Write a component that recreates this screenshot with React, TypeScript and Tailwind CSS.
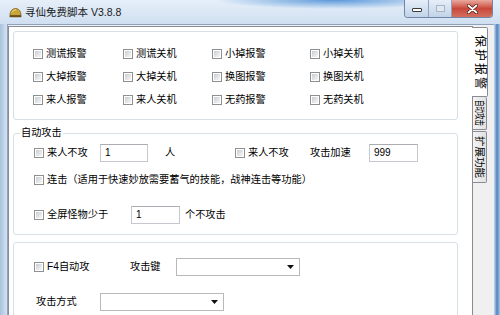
const Box = () => (
  <span className="w-[10px] h-[10px] shrink-0 border border-[#8e8f8f] bg-white p-[1px] flex">
    <span className="flex-1 bg-linear-to-br from-[#c9cdd3] to-[#f7f7f7]" />
  </span>
);

const Check = ({ label }: { label: string }) => (
  <div className="flex items-center gap-[3px] whitespace-nowrap">
    <Box />
    <span>{label}</span>
  </div>
);

const Field = ({ w, value }: { w: string; value: string }) => (
  <div className={`${w} h-[18px] shrink-0 border border-[#c5c8ce] border-t-[#abadb3] bg-white text-[10px] pl-[4px] flex items-center`}>
    {value}
  </div>
);

const Select = () => (
  <div className="w-[124px] h-[18px] shrink-0 border border-[#b9b9b9] bg-white flex items-center justify-end pr-[5px]">
    <svg width="7" height="4" viewBox="0 0 7 4">
      <path d="M0 0h7L3.5 4z" fill="#111" />
    </svg>
  </div>
);

const App = () => {
  return (
    <div className="w-[500px] h-[315px] overflow-hidden flex flex-col font-['Liberation_Sans','Noto_Sans_CJK_SC',sans-serif] text-[10.2px] leading-none text-black">
      {/* title bar */}
      <div className="h-[24px] shrink-0 flex items-start bg-[radial-gradient(ellipse_120px_9px_at_335px_0px,#5a98da,transparent),linear-gradient(180deg,#e6eff9,#cfdff1)]">
        <div className="flex items-center h-[25px] pl-[9px] gap-[3px]">
          <svg width="13" height="11" viewBox="0 0 13 11">
            <path d="M1 8.5C1 4 3.5 1.5 6.5 1.5S12 4 12 8.5z" fill="#c9a437" stroke="#7a5b18" strokeWidth="0.8" />
            <path d="M3 5.5C4 3.5 5.5 2.8 7 2.8" stroke="#f3df8a" strokeWidth="1" fill="none" />
            <rect x="0.5" y="8.3" width="12" height="2" rx="0.8" fill="#6b4e14" />
          </svg>
          <span className="text-[10.5px] text-[#1a1a1a]">寻仙免费脚本 V3.8.8</span>
        </div>
        <div className="ml-auto mr-[7px] flex h-[18px] rounded-b-[4px] overflow-hidden border border-t-0 border-[#6f85a3]">
          <div className="w-[24px] flex items-center justify-center pt-[3px] bg-linear-to-b from-[#e6eef8] to-[#c1d3e9] border-r border-[#8fa3bf]">
            <span className="w-[10px] h-[4px] bg-white border border-[#3a3a3a] rounded-[1px]" />
          </div>
          <div className="w-[23px] flex items-center justify-center bg-linear-to-b from-[#e6eef8] to-[#c1d3e9] border-r border-[#8fa3bf]">
            <span className="w-[9px] h-[7px] border border-[#a9b5c5] bg-[#dfe7f1]" />
          </div>
          <div className="w-[40px] flex items-center justify-center bg-linear-to-b from-[#e9a89f] via-[#c8473b] to-[#d36e5f]">
            <svg width="11" height="10" viewBox="0 0 11 10">
              <path d="M1.5 1.5l8 7M9.5 1.5l-8 7" stroke="#4a1b15" strokeWidth="3.2" strokeLinecap="round" />
              <path d="M1.5 1.5l8 7M9.5 1.5l-8 7" stroke="#fff" strokeWidth="1.8" strokeLinecap="round" />
            </svg>
          </div>
        </div>
      </div>

      <div className="flex-1 flex min-h-0">
        {/* left frame */}
        <div className="w-[7px] shrink-0 bg-linear-to-r from-[#a9c2de] to-[#d3e2f2]" />

        {/* client area */}
        <div className="w-[487px] shrink-0 flex border-t border-l border-[#8ea2bc] bg-[#f0f0f0] pt-[1px]">
          {/* tab page */}
          <div className="w-[465px] shrink-0 bg-white border-t border-l border-r border-[#898c95] pl-[4px] pt-[4px] flex flex-col">
            {/* alarms */}
            <div className="w-[445px] h-[89px] shrink-0 border border-[#d5dfe5] rounded-[3px] pl-[19px] pt-[11px] grid grid-cols-[90px_89px_98px_1fr] auto-rows-[23px] items-center">
              <Check label="测谎报警" />
              <Check label="测谎关机" />
              <Check label="小掉报警" />
              <Check label="小掉关机" />
              <Check label="大掉报警" />
              <Check label="大掉关机" />
              <Check label="换图报警" />
              <Check label="换图关机" />
              <Check label="来人报警" />
              <Check label="来人关机" />
              <Check label="无药报警" />
              <Check label="无药关机" />
            </div>

            {/* auto attack group */}
            <div className="relative mt-[13px] w-[445px] h-[102px] shrink-0 border border-[#d5dfe5] rounded-[3px] flex flex-col">
              <span className="absolute -top-[6px] left-[6px] bg-white px-[1px]">自动攻击</span>
              <div className="mt-[9px] h-[20px] flex items-center pl-[20px]">
                <div className="w-[66px]"><Check label="来人不攻" /></div>
                <Field w="w-[48px]" value="1" />
                <span className="ml-[17px] w-[11px]">人</span>
                <div className="ml-[59px] w-[75px]"><Check label="来人不攻" /></div>
                <span className="w-[59px]">攻击加速</span>
                <Field w="w-[49px]" value="999" />
              </div>
              <div className="mt-[7px] h-[20px] flex items-center pl-[20px]">
                <Check label="连击（适用于快速妙放需要蓄气的技能，战神连击等功能）" />
              </div>
              <div className="mt-[15px] h-[20px] flex items-center pl-[20px]">
                <div className="w-[97px]"><Check label="全屏怪物少于" /></div>
                <Field w="w-[49px]" value="1" />
                <span className="ml-[5px]">个不攻击</span>
              </div>
            </div>

            {/* F4 */}
            <div className="mt-[7px] w-[445px] h-[80px] shrink-0 border border-[#d5dfe5] rounded-[3px] flex flex-col">
              <div className="mt-[14px] h-[20px] flex items-center pl-[20px]">
                <div className="w-[96px]"><Check label="F4自动攻" /></div>
                <span className="w-[46px]">攻击键</span>
                <Select />
              </div>
              <div className="mt-[15px] h-[20px] flex items-center pl-[22px]">
                <span className="w-[64px]">攻击方式</span>
                <Select />
              </div>
            </div>
          </div>

          {/* vertical tabs */}
          <div className="w-[21px] shrink-0 flex flex-col pt-[1px]">
            <div className="-ml-[1px] w-[16px] h-[70px] bg-white border border-l-0 border-[#898c95] rounded-r-[2px] flex items-center justify-center">
              <span className="[writing-mode:vertical-rl] [text-orientation:sideways] tracking-[2px] text-[12px] pt-[2px]">保护报警</span>
            </div>
            <div className="w-[14px] h-[33px] bg-linear-to-r from-[#f4f4f4] to-[#e2e2e2] border border-l-0 border-t-0 border-[#898c95] rounded-r-[2px] flex flex-col items-center justify-center">
              <span className="shrink-0 [writing-mode:vertical-rl] [text-orientation:sideways] text-[10.5px] [transform:scaleY(0.62)]">自动攻击</span>
            </div>
            <div className="mt-[1px] w-[14px] h-[52px] bg-linear-to-r from-[#f4f4f4] to-[#e2e2e2] border border-l-0 border-[#898c95] rounded-r-[2px] flex items-center justify-center">
              <span className="[writing-mode:vertical-rl] [text-orientation:sideways] text-[10.5px]">扩展功能</span>
            </div>
          </div>
        </div>

        {/* right frame */}
        <div className="w-[6px] shrink-0 bg-linear-to-r from-[#c9dcf0] via-[#4f83bd] to-[#a7c4e4]" />
      </div>
    </div>
  );
};

export default App;
